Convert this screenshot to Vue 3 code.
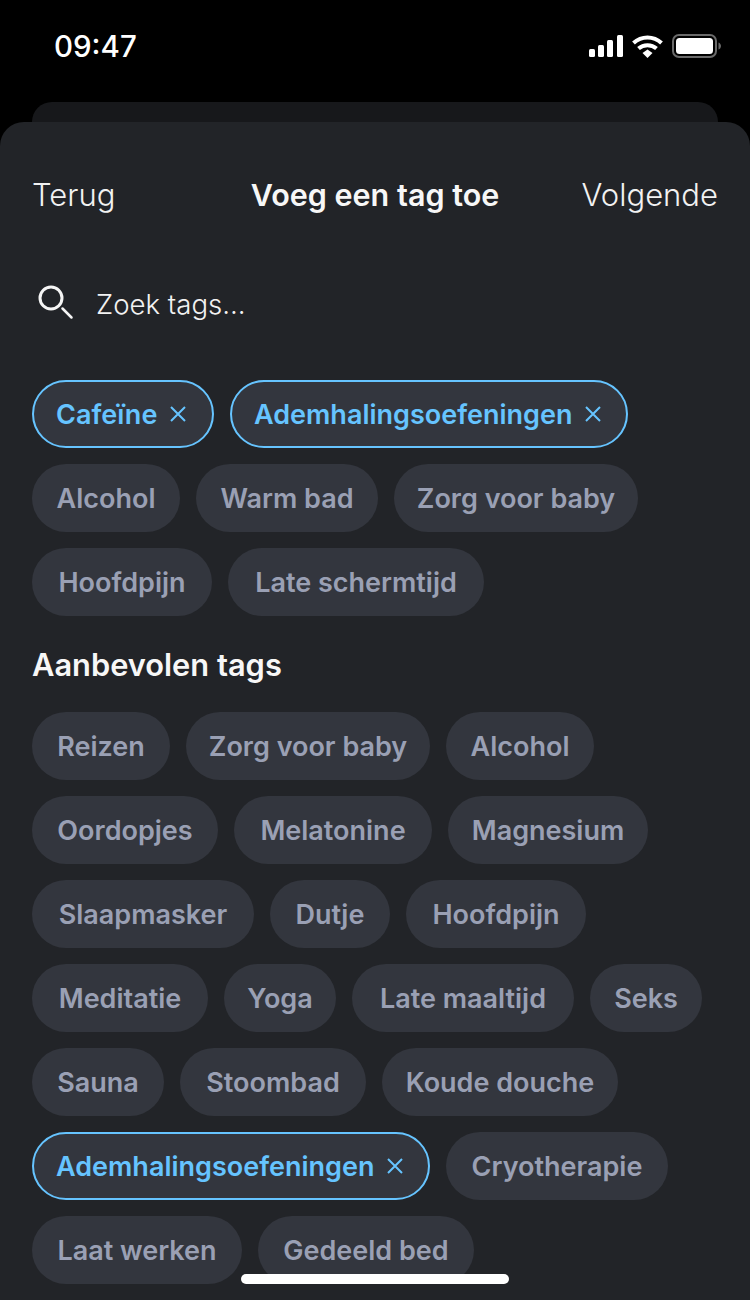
<template>
  <div class="screen">
    <div class="status">
      <span class="time">09:47</span>
      <div class="status-icons">
        <svg width="34" height="22" viewBox="0 0 34 22" fill="#fff">
          <rect x="0" y="14" width="6" height="8" rx="1.5" />
          <rect x="9" y="10" width="6" height="12" rx="1.5" />
          <rect x="18" y="5" width="6" height="17" rx="1.5" />
          <rect x="28" y="0" width="6" height="22" rx="1.5" />
        </svg>
        <svg width="31" height="23" viewBox="0 0 31 23" fill="none" stroke="#fff" stroke-width="4">
          <path d="M1.500 8C9.500 0.500 21.500 0.500 29.500 8" />
          <path d="M6.500 13.500C11.500 9 19.500 9 24.500 13.500" />
          <path d="M10.500 18L15.500 14.500L20.500 18L15.500 23Z" fill="#fff" stroke="none" />
        </svg>
        <svg width="49" height="24" viewBox="0 0 49 24">
          <rect x="1" y="1" width="43" height="22" rx="6" fill="none" stroke="#6a6a6a" stroke-width="2" />
          <rect x="4" y="4" width="37" height="16" rx="3.500" fill="#fff" />
          <path d="M46.500 8.500C48 9 49 10.500 49 12C49 13.500 48 15 46.500 15.500Z" fill="#6a6a6a" />
        </svg>
      </div>
    </div>

    <div class="back-card"></div>

    <div class="sheet">
      <header class="nav">
        <span class="nav-link">Terug</span>
        <span class="nav-title">Voeg een tag toe</span>
        <span class="nav-link nav-link--end">Volgende</span>
      </header>

      <div class="search">
        <svg width="38" height="38" viewBox="0 0 38 38" fill="none" stroke="#f5f5f5" stroke-width="3">
          <circle cx="13" cy="13" r="11" />
          <path d="M24.500 23.500L33.500 32.500" stroke-linecap="round" stroke-width="2.500" />
        </svg>
        <span class="search-text">Zoek tags...</span>
      </div>

      <div class="chips">
        <span
          v-for="t in selectedTags"
          :key="t.label"
          class="chip"
          :class="{ 'chip--on': t.on }"
          :style="{ width: t.w + 'px' }"
        >
          {{ t.label }}
          <svg v-if="t.on" class="chip-x" width="18" height="18" viewBox="0 0 18 18" stroke="#66c4ff" stroke-width="2">
            <path d="M2 2L16 16M16 2L2 16" />
          </svg>
        </span>
      </div>

      <h2 class="section-title">Aanbevolen tags</h2>

      <div class="chips">
        <span
          v-for="t in suggestedTags"
          :key="t.label"
          class="chip"
          :class="{ 'chip--on': t.on }"
          :style="{ width: t.w + 'px' }"
        >
          {{ t.label }}
          <svg v-if="t.on" class="chip-x" width="18" height="18" viewBox="0 0 18 18" stroke="#66c4ff" stroke-width="2">
            <path d="M2 2L16 16M16 2L2 16" />
          </svg>
        </span>
      </div>
    </div>

    <div class="home-bar"></div>
  </div>
</template>

<script setup>
const selectedTags = [
  { label: 'Cafeïne', w: 182, on: true },
  { label: 'Ademhalingsoefeningen', w: 398, on: true },
  { label: 'Alcohol', w: 148 },
  { label: 'Warm bad', w: 182 },
  { label: 'Zorg voor baby', w: 244 },
  { label: 'Hoofdpijn', w: 180 },
  { label: 'Late schermtijd', w: 256 },
]

const suggestedTags = [
  { label: 'Reizen', w: 138 },
  { label: 'Zorg voor baby', w: 244 },
  { label: 'Alcohol', w: 148 },
  { label: 'Oordopjes', w: 186 },
  { label: 'Melatonine', w: 198 },
  { label: 'Magnesium', w: 200 },
  { label: 'Slaapmasker', w: 222 },
  { label: 'Dutje', w: 120 },
  { label: 'Hoofdpijn', w: 180 },
  { label: 'Meditatie', w: 176 },
  { label: 'Yoga', w: 112 },
  { label: 'Late maaltijd', w: 222 },
  { label: 'Seks', w: 112 },
  { label: 'Sauna', w: 132 },
  { label: 'Stoombad', w: 186 },
  { label: 'Koude douche', w: 236 },
  { label: 'Ademhalingsoefeningen', w: 398, on: true },
  { label: 'Cryotherapie', w: 222 },
  { label: 'Laat werken', w: 210 },
  { label: 'Gedeeld bed', w: 216 },
]
</script>

<style>
html, body { margin: 0; background: #000; }
</style>

<style scoped>
.screen {
  position: relative;
  width: 750px;
  height: 1300px;
  overflow: hidden;
  background: #000;
  font-family: Inter, "Liberation Sans", sans-serif;
}

.status {
  height: 102px;
  box-sizing: border-box;
  padding: 28px 29px 0 54px;
  display: flex;
  justify-content: space-between;
  align-items: flex-start;
}
.time {
  color: #fff;
  font-size: 29.500px;
  font-weight: 500;
  line-height: 36px;
}
.status-icons {
  display: flex;
  align-items: center;
  gap: 9px;
  margin-top: 6px;
}

.back-card {
  height: 60px;
  margin: 0 32px -40px;
  background: #17181b;
  border-radius: 20px 20px 0 0;
}

.sheet {
  position: relative;
  height: 1178px;
  box-sizing: border-box;
  padding: 0 32px;
  background: #222428;
  border-radius: 24px 24px 0 0;
}

.nav {
  height: 144px;
  margin-bottom: 2px;
  display: grid;
  grid-template-columns: 1fr auto 1fr;
  align-items: center;
}
.nav-link {
  color: #f2f2f2;
  font-size: 31px;
  font-weight: 300;
}
.nav-link--end { text-align: right; }
.nav-title {
  color: #f7f7f7;
  font-size: 30.500px;
  font-weight: 600;
}

.search {
  height: 72px;
  display: flex;
  align-items: center;
  gap: 20px;
  padding-left: 6px;
  margin-bottom: 40px;
}
.search-text {
  color: #f2f2f2;
  font-size: 27.600px;
  font-weight: 300;
}

.chips {
  display: flex;
  flex-wrap: wrap;
  gap: 16px;
}
.chip {
  height: 68px;
  box-sizing: border-box;
  display: inline-flex;
  align-items: center;
  justify-content: center;
  gap: 12px;
  border-radius: 34px;
  background: #33363e;
  color: #9aa0b4;
  font-size: 27px;
  font-weight: 600;
}
.chip--on {
  border: 2px solid #66c4ff;
  padding-left: 22px;
  justify-content: flex-start;
  color: #66c4ff;
}
.chip-x { flex: none; }

.section-title {
  margin: 28px 0 26px;
  color: #f7f7f7;
  font-size: 30.800px;
  line-height: 42px;
  font-weight: 600;
}

.home-bar {
  position: absolute;
  left: 241px;
  top: 1274px;
  width: 268px;
  height: 10px;
  border-radius: 5px;
  background: #fff;
}
</style>
